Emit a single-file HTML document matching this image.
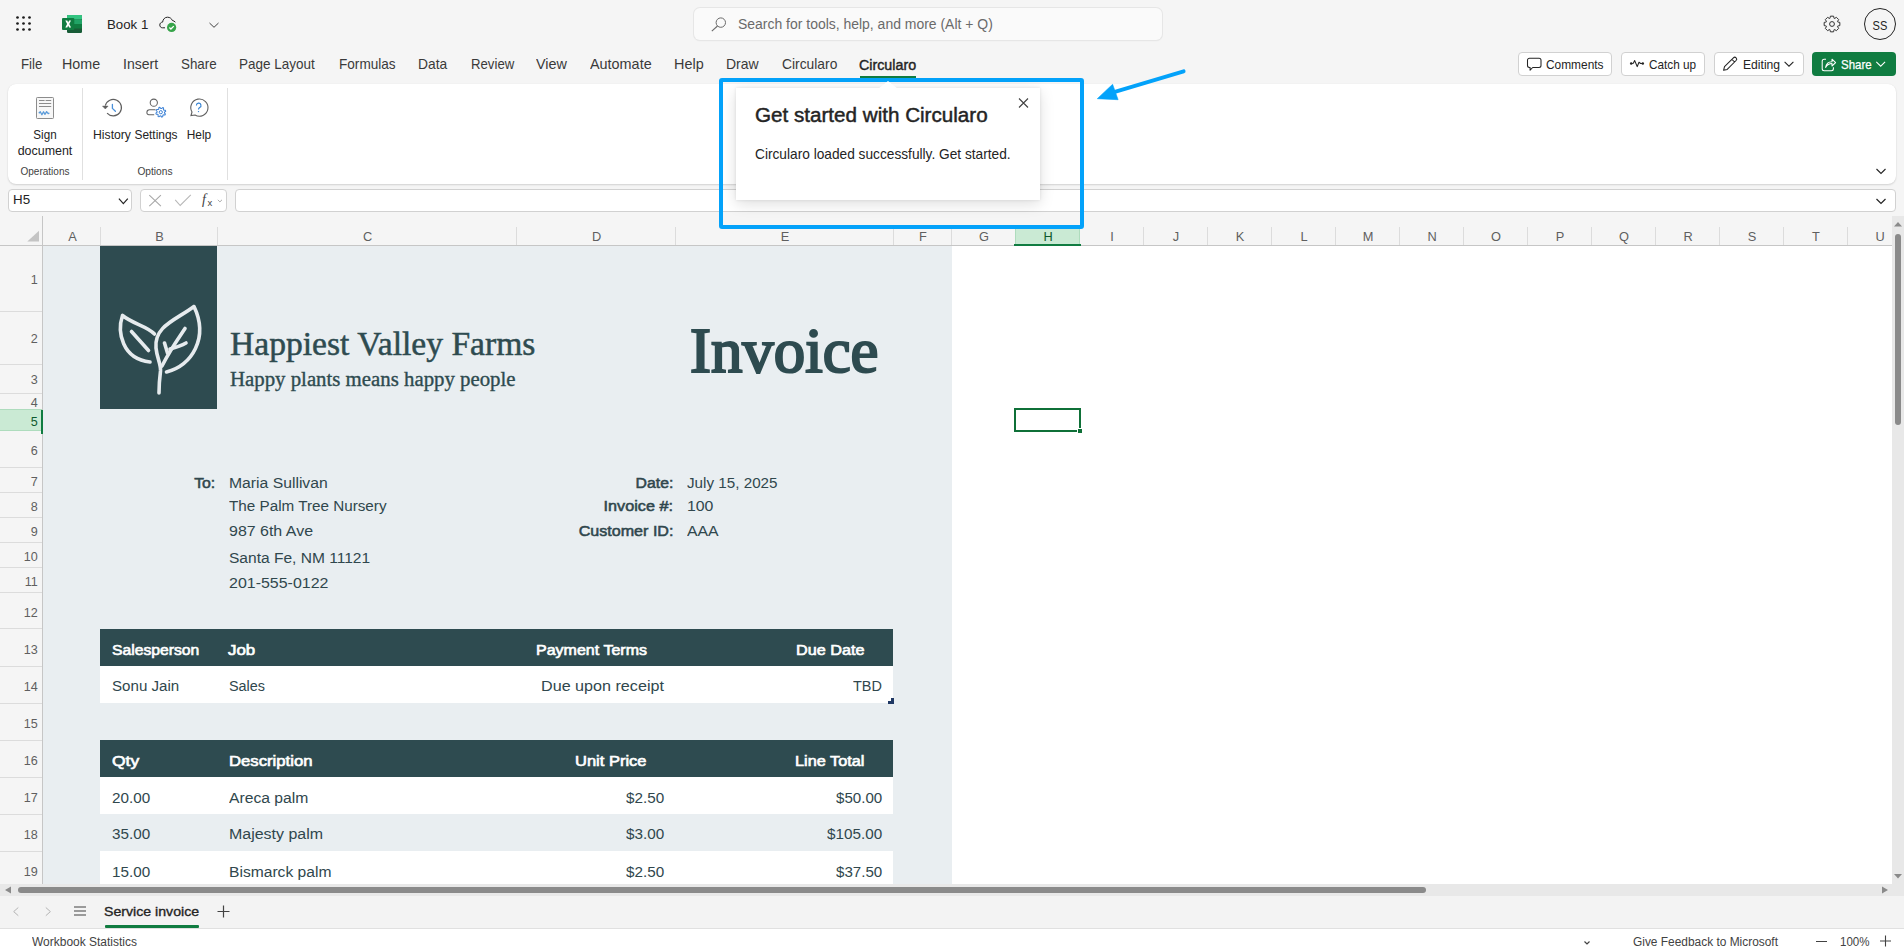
<!DOCTYPE html>
<html><head><meta charset="utf-8"><title>Excel</title>
<style>
html,body{margin:0;padding:0;}
body{width:1904px;height:951px;position:relative;overflow:hidden;background:#f5f5f5;font-family:"Liberation Sans",sans-serif;}
.t{position:absolute;white-space:nowrap;}
.r{position:absolute;display:block;}
</style></head><body>
<svg class="r" style="left:0px;top:0px;" width="40" height="40" viewBox="0 0 40 40"><circle cx="17.5" cy="17.5" r="1.35" fill="#1b1b1b"/><circle cx="17.5" cy="23.5" r="1.35" fill="#1b1b1b"/><circle cx="17.5" cy="29.5" r="1.35" fill="#1b1b1b"/><circle cx="23.5" cy="17.5" r="1.35" fill="#1b1b1b"/><circle cx="23.5" cy="23.5" r="1.35" fill="#1b1b1b"/><circle cx="23.5" cy="29.5" r="1.35" fill="#1b1b1b"/><circle cx="29.5" cy="17.5" r="1.35" fill="#1b1b1b"/><circle cx="29.5" cy="23.5" r="1.35" fill="#1b1b1b"/><circle cx="29.5" cy="29.5" r="1.35" fill="#1b1b1b"/></svg>
<svg class="r" style="left:60px;top:13px;" width="24" height="22" viewBox="0 0 24 22">
<rect x="7" y="2" width="15" height="18" rx="1.2" fill="#185c37"/>
<rect x="7" y="2" width="15" height="4.5" rx="1" fill="#33c481"/>
<rect x="7" y="6.5" width="15" height="4.5" fill="#21a366"/>
<rect x="7" y="11" width="15" height="4.5" fill="#107c41"/>
<rect x="2" y="5" width="12.3" height="12" rx="1" fill="#107c41"/>
<path d="M5.3 7.6 L7.3 7.6 L8.2 9.6 L9.1 7.6 L11 7.6 L9.3 11 L11.1 14.4 L9.1 14.4 L8.2 12.4 L7.3 14.4 L5.3 14.4 L7.1 11 Z" fill="#fff"/>
</svg>
<div class="t" id="t0" style="top:17.63px;font-size:13.2px;line-height:13.2px;color:#242424;font-weight:400;font-family:'Liberation Sans', sans-serif;left:107.372px;transform-origin:0 0;transform:scaleX(1.0047);">Book 1</div>
<svg class="r" style="left:156px;top:12px;" width="26" height="22" viewBox="0 0 26 22">
<path d="M9 15.8 H6.5 C4.5 15.8 3.8 14.2 3.8 13 C3.8 11.3 5 10.2 6.6 10.1 C6.9 7.3 8.8 5.2 11.5 5.2 C13.9 5.2 15.7 6.7 16.4 8.5 C17.4 8.7 18.5 9.2 19.4 10.2" fill="none" stroke="#242424" stroke-width="1"/>
<circle cx="15.6" cy="15.4" r="4.6" fill="#37a44a"/>
<path d="M13.4 15.6 L14.9 17 L17.8 14.1" fill="none" stroke="#fff" stroke-width="1.3"/>
</svg>
<svg class="r" style="left:205px;top:18px;" width="18" height="12" viewBox="0 0 18 12"><path d="M4.5 5 L9 9.3 L13.5 5" fill="none" stroke="#424242" stroke-width="1"/></svg>
<div class="r" style="left:694px;top:8px;width:468px;height:32px;background:#fafafa;border-radius:6px;box-shadow:0 0 0 1px #e6e6e6, 0 1px 2px rgba(0,0,0,0.06);"></div>
<svg class="r" style="left:708px;top:14px;" width="22" height="20" viewBox="0 0 22 20"><circle cx="12.8" cy="8.6" r="4.7" fill="none" stroke="#6a6a6a" stroke-width="1"/><path d="M9.5 12 L3.8 17.2" stroke="#6a6a6a" stroke-width="1.1"/></svg>
<div class="t" id="t1" style="top:17.92px;font-size:13.8px;line-height:13.8px;color:#6a6a6a;font-weight:400;font-family:'Liberation Sans', sans-serif;left:737.7479999999999px;transform-origin:0 0;transform:scaleX(1.0114);">Search for tools, help, and more (Alt + Q)</div>
<svg class="r" style="left:1820px;top:12px;" width="24" height="24" viewBox="0 0 24 24"><path d="M19.84 10.41 L19.84 13.59 L17.62 14.11 L17.47 14.48 L18.67 16.42 L16.42 18.67 L14.48 17.47 L14.11 17.62 L13.59 19.84 L10.41 19.84 L9.89 17.62 L9.52 17.47 L7.58 18.67 L5.33 16.42 L6.53 14.48 L6.38 14.11 L4.16 13.59 L4.16 10.41 L6.38 9.89 L6.53 9.52 L5.33 7.58 L7.58 5.33 L9.52 6.53 L9.89 6.38 L10.41 4.16 L13.59 4.16 L14.11 6.38 L14.48 6.53 L16.42 5.33 L18.67 7.58 L17.47 9.52 L17.62 9.89 Z" fill="none" stroke="#303030" stroke-width="1" stroke-linejoin="round"/><circle cx="12" cy="12" r="2.4" fill="none" stroke="#303030" stroke-width="1"/></svg>
<div class="r" style="left:1864px;top:8px;width:30px;height:30px;background:transparent;border:1px solid #242424;border-radius:50%;"></div>
<div class="t" id="t2" style="top:20.19px;font-size:12.3px;line-height:12.3px;color:#242424;font-weight:400;font-family:'Liberation Sans', sans-serif;left:1579.9px;width:600px;text-align:center;transform-origin:50% 0;transform:scaleX(0.9011);">SS</div>
<div class="t" id="t3" style="top:57.40px;font-size:14.3px;line-height:14.3px;color:#3a3a3a;font-weight:400;font-family:'Liberation Sans', sans-serif;left:20.828px;transform-origin:0 0;transform:scaleX(0.9261);">File</div>
<div class="t" id="t4" style="top:57.40px;font-size:14.3px;line-height:14.3px;color:#3a3a3a;font-weight:400;font-family:'Liberation Sans', sans-serif;left:62.428px;transform-origin:0 0;transform:scaleX(1.0001);">Home</div>
<div class="t" id="t5" style="top:57.40px;font-size:14.3px;line-height:14.3px;color:#3a3a3a;font-weight:400;font-family:'Liberation Sans', sans-serif;left:123.428px;transform-origin:0 0;transform:scaleX(0.9826);">Insert</div>
<div class="t" id="t6" style="top:57.40px;font-size:14.3px;line-height:14.3px;color:#3a3a3a;font-weight:400;font-family:'Liberation Sans', sans-serif;left:180.928px;transform-origin:0 0;transform:scaleX(0.9342);">Share</div>
<div class="t" id="t7" style="top:57.40px;font-size:14.3px;line-height:14.3px;color:#3a3a3a;font-weight:400;font-family:'Liberation Sans', sans-serif;left:239.428px;transform-origin:0 0;transform:scaleX(0.9433);">Page Layout</div>
<div class="t" id="t8" style="top:57.40px;font-size:14.3px;line-height:14.3px;color:#3a3a3a;font-weight:400;font-family:'Liberation Sans', sans-serif;left:338.928px;transform-origin:0 0;transform:scaleX(0.9505);">Formulas</div>
<div class="t" id="t9" style="top:57.40px;font-size:14.3px;line-height:14.3px;color:#3a3a3a;font-weight:400;font-family:'Liberation Sans', sans-serif;left:418.428px;transform-origin:0 0;transform:scaleX(0.9649);">Data</div>
<div class="t" id="t10" style="top:57.40px;font-size:14.3px;line-height:14.3px;color:#3a3a3a;font-weight:400;font-family:'Liberation Sans', sans-serif;left:470.828px;transform-origin:0 0;transform:scaleX(0.9222);">Review</div>
<div class="t" id="t11" style="top:57.40px;font-size:14.3px;line-height:14.3px;color:#3a3a3a;font-weight:400;font-family:'Liberation Sans', sans-serif;left:536.428px;transform-origin:0 0;transform:scaleX(1.0068);">View</div>
<div class="t" id="t12" style="top:57.40px;font-size:14.3px;line-height:14.3px;color:#3a3a3a;font-weight:400;font-family:'Liberation Sans', sans-serif;left:589.928px;transform-origin:0 0;transform:scaleX(1.0072);">Automate</div>
<div class="t" id="t13" style="top:57.40px;font-size:14.3px;line-height:14.3px;color:#3a3a3a;font-weight:400;font-family:'Liberation Sans', sans-serif;left:673.928px;transform-origin:0 0;transform:scaleX(1.0081);">Help</div>
<div class="t" id="t14" style="top:57.40px;font-size:14.3px;line-height:14.3px;color:#3a3a3a;font-weight:400;font-family:'Liberation Sans', sans-serif;left:726.428px;transform-origin:0 0;transform:scaleX(0.9781);">Draw</div>
<div class="t" id="t15" style="top:57.40px;font-size:14.3px;line-height:14.3px;color:#3a3a3a;font-weight:400;font-family:'Liberation Sans', sans-serif;left:781.728px;transform-origin:0 0;transform:scaleX(0.9675);">Circularo</div>
<div class="t" id="t16" style="top:57.65px;font-size:14px;line-height:14px;color:#242424;font-weight:400;font-family:'Liberation Sans', sans-serif;left:859.44px;transform-origin:0 0;transform:scaleX(1.0197);-webkit-text-stroke:0.4px currentColor;">Circularo</div>
<div class="r" style="left:860px;top:75.6px;width:56px;height:2.6px;background:#107c41;"></div>
<div class="r" style="left:1517.5px;top:52px;width:94px;height:24px;background:#ffffff;box-sizing:border-box;border:1px solid #d1d1d1;border-radius:4px;"></div>
<div class="t" id="t17" style="top:59.00px;font-size:12.4px;line-height:12.4px;color:#242424;font-weight:400;font-family:'Liberation Sans', sans-serif;left:1546.004px;transform-origin:0 0;transform:scaleX(0.9597);">Comments</div>
<svg class="r" style="left:1524px;top:54px;" width="20" height="20" viewBox="0 0 20 20"><path d="M5.5 4.3 h9.5 a2 2 0 0 1 2 2 v5.2 a2 2 0 0 1 -2 2 h-6.3 l-2.6 2.7 v-2.7 h-0.6 a2 2 0 0 1 -2 -2 v-5.2 a2 2 0 0 1 2 -2 Z" fill="none" stroke="#242424" stroke-width="1.05" stroke-linejoin="round"/></svg>
<div class="r" style="left:1620.5px;top:52px;width:84px;height:24px;background:#ffffff;box-sizing:border-box;border:1px solid #d1d1d1;border-radius:4px;"></div>
<div class="t" id="t18" style="top:59.00px;font-size:12.4px;line-height:12.4px;color:#242424;font-weight:400;font-family:'Liberation Sans', sans-serif;left:1649.3039999999999px;transform-origin:0 0;transform:scaleX(0.9496);">Catch up</div>
<svg class="r" style="left:1626px;top:54px;" width="22" height="20" viewBox="0 0 22 20"><path d="M5 9.5 L7.3 9.2 L8.7 6.6 L11.2 12.6 L13 8.3 L14.6 9.5 L17 9.5" fill="none" stroke="#242424" stroke-width="1.1" stroke-linejoin="round"/><circle cx="5.2" cy="9.5" r="1.25" fill="#242424"/><circle cx="16.8" cy="9.5" r="1.25" fill="#242424"/></svg>
<div class="r" style="left:1713.5px;top:52px;width:90px;height:24px;background:#ffffff;box-sizing:border-box;border:1px solid #d1d1d1;border-radius:4px;"></div>
<div class="t" id="t19" style="top:59.00px;font-size:12.4px;line-height:12.4px;color:#242424;font-weight:400;font-family:'Liberation Sans', sans-serif;left:1742.6039999999998px;transform-origin:0 0;transform:scaleX(0.9789);">Editing</div>
<svg class="r" style="left:1718px;top:52px;" width="80" height="24" viewBox="0 0 80 24"><path d="M5.6 18.3 l0.9 -3.6 l8.9 -8.9 a1.9 1.9 0 0 1 2.7 2.7 l-8.9 8.9 Z M13.9 7.3 l2.7 2.7" fill="none" stroke="#242424" stroke-width="1.05" stroke-linejoin="round"/><path d="M66.6 9.8 l4.4 4.4 l4.4 -4.4" fill="none" stroke="#242424" stroke-width="1.05"/></svg>
<div class="r" style="left:1812px;top:52px;width:84px;height:24px;background:#107c41;border-radius:4px;"></div>
<div class="t" id="t20" style="top:59.00px;font-size:12.4px;line-height:12.4px;color:#ffffff;font-weight:400;font-family:'Liberation Sans', sans-serif;left:1840.904px;transform-origin:0 0;transform:scaleX(0.9248);-webkit-text-stroke:0.25px #fff;">Share</div>
<svg class="r" style="left:1812px;top:52px;" width="84" height="24" viewBox="0 0 84 24"><path d="M14 7.2 h-1.8 a2 2 0 0 0 -2 2 v7.6 a2 2 0 0 0 2 2 h7.2 a2 2 0 0 0 2 -2 v-1.6" fill="none" stroke="#fff" stroke-width="1.05"/><path d="M13.6 15.4 c0.6 -3.6 2.9 -5.6 6.4 -5.6 v-2.6 l3.6 3.4 l-3.6 3.4 v-2.5 c-2.6 0 -4.8 1.1 -6.4 3.9 Z" fill="none" stroke="#fff" stroke-width="1.05" stroke-linejoin="round"/><path d="M64.3 9.8 l4.4 4.4 l4.4 -4.4" fill="none" stroke="#fff" stroke-width="1.05"/></svg>
<div class="r" style="left:8px;top:84px;width:1888px;height:100px;background:#ffffff;border-radius:8px;box-shadow:0 1px 2px rgba(0,0,0,0.14), 0 0 1px rgba(0,0,0,0.08);"></div>
<div class="r" style="left:82px;top:88px;width:1px;height:92px;background:#e0e0e0;"></div>
<div class="r" style="left:227px;top:88px;width:1px;height:92px;background:#e0e0e0;"></div>
<svg class="r" style="left:32px;top:94px;" width="26" height="28" viewBox="0 0 26 28"><rect x="4.5" y="3.5" width="17" height="21" rx="0.8" fill="#f7f7f7" stroke="#8c8c8c" stroke-width="1"/>
<path d="M7 6.5 h5.6 M13.6 6.5 h5.6 M7 9.5 h12.2 M7 12.5 h12.2" stroke="#8c8c8c" stroke-width="1"/>
<path d="M6.8 19.3 l1.5 -1.6 l1.6 3 l1.6 -2.9 l1.5 2.5 l1.6 -2.7 l1.6 2 l1.2 -0.6" fill="none" stroke="#5b9bd9" stroke-width="1.3" stroke-linejoin="round"/></svg>
<div class="t" id="t21" style="top:128.79px;font-size:12.3px;line-height:12.3px;color:#242424;font-weight:400;font-family:'Liberation Sans', sans-serif;left:-255.15px;width:600px;text-align:center;transform-origin:50% 0;transform:scaleX(0.9455);">Sign</div>
<div class="t" id="t22" style="top:144.79px;font-size:12.3px;line-height:12.3px;color:#242424;font-weight:400;font-family:'Liberation Sans', sans-serif;left:-254.9px;width:600px;text-align:center;transform-origin:50% 0;transform:scaleX(1.0105);">document</div>
<div class="t" id="t23" style="top:167.17px;font-size:10.2px;line-height:10.2px;color:#424242;font-weight:400;font-family:'Liberation Sans', sans-serif;left:-255.1px;width:600px;text-align:center;transform-origin:50% 0;transform:scaleX(0.9834);">Operations</div>
<svg class="r" style="left:100px;top:95px;" width="26" height="24" viewBox="0 0 26 24"><path d="M5.3 10.6 A8.2 8.2 0 1 1 7.1 18.1" fill="none" stroke="#5f5f5f" stroke-width="1.2"/>
<path d="M2.5 11.1 L8.1 11.1 L5.3 14 Z" fill="#5f5f5f" stroke="#5f5f5f" stroke-width="0.5" stroke-linejoin="round"/>
<path d="M12.4 9.4 V13.4 L15.4 16.3" fill="none" stroke="#4a90d9" stroke-width="1.3" stroke-linecap="round" stroke-linejoin="round"/></svg>
<div class="t" id="t24" style="top:128.79px;font-size:12.3px;line-height:12.3px;color:#242424;font-weight:400;font-family:'Liberation Sans', sans-serif;left:-188.0px;width:600px;text-align:center;transform-origin:50% 0;transform:scaleX(0.9926);">History</div>
<svg class="r" style="left:143px;top:94px;" width="28" height="28" viewBox="0 0 28 28"><circle cx="10.8" cy="8.7" r="3.6" fill="none" stroke="#616161" stroke-width="1.05"/>
<path d="M12.5 15.8 h-6 a2.6 2.6 0 0 0 -2.6 2.6 v0.4 a1.9 1.9 0 0 0 1.9 1.9 h5.4" fill="none" stroke="#616161" stroke-width="1.05"/>
<path d="M21.43 18.92 L22.42 20.11 L21.96 20.98 L20.42 20.82 L19.86 21.28 L19.71 22.82 L18.78 23.10 L17.80 21.90 L17.08 21.83 L15.89 22.82 L15.02 22.36 L15.18 20.82 L14.72 20.26 L13.18 20.11 L12.90 19.18 L14.10 18.20 L14.17 17.48 L13.18 16.29 L13.64 15.42 L15.18 15.58 L15.74 15.12 L15.89 13.58 L16.82 13.30 L17.80 14.50 L18.52 14.57 L19.71 13.58 L20.58 14.04 L20.42 15.58 L20.88 16.14 L22.42 16.29 L22.70 17.22 L21.50 18.20 Z" fill="#ffffff" stroke="#3f83d6" stroke-width="1.05" stroke-linejoin="round"/>
<circle cx="17.8" cy="18.2" r="1.6" fill="none" stroke="#3f83d6" stroke-width="1"/></svg>
<div class="t" id="t25" style="top:128.79px;font-size:12.3px;line-height:12.3px;color:#242424;font-weight:400;font-family:'Liberation Sans', sans-serif;left:-144.0px;width:600px;text-align:center;transform-origin:50% 0;transform:scaleX(0.9673);">Settings</div>
<svg class="r" style="left:184.5px;top:95px;" width="26" height="26" viewBox="0 0 26 26"><path d="M6 20.5 l1-3.5 A8.6 8.6 0 1 1 10 20 Z" fill="none" stroke="#616161" stroke-width="1.1"/>
<path d="M11.4 10.5 a2.3 2.3 0 1 1 3.3 2 c-0.8 0.5 -1.2 1 -1.2 1.9" fill="none" stroke="#2f7fd1" stroke-width="1.1"/>
<circle cx="13.5" cy="16.6" r="0.7" fill="#2f7fd1"/></svg>
<div class="t" id="t26" style="top:128.79px;font-size:12.3px;line-height:12.3px;color:#242424;font-weight:400;font-family:'Liberation Sans', sans-serif;left:-100.75px;width:600px;text-align:center;transform-origin:50% 0;transform:scaleX(0.9679);">Help</div>
<div class="t" id="t27" style="top:167.17px;font-size:10.2px;line-height:10.2px;color:#424242;font-weight:400;font-family:'Liberation Sans', sans-serif;left:-145.15px;width:600px;text-align:center;transform-origin:50% 0;transform:scaleX(1.0002);">Options</div>
<svg class="r" style="left:1872px;top:163.5px;" width="18" height="14" viewBox="0 0 18 14"><path d="M4.5 5 L9 9.5 L13.5 5" fill="none" stroke="#242424" stroke-width="1.1"/></svg>
<div class="r" style="left:8px;top:188.5px;width:123.5px;height:23px;background:#ffffff;box-sizing:border-box;border:1px solid #d1d1d1;border-radius:4px;"></div>
<div class="t" id="t28" style="top:193.49px;font-size:13.6px;line-height:13.6px;color:#242424;font-weight:400;font-family:'Liberation Sans', sans-serif;left:12.856px;transform-origin:0 0;transform:scaleX(0.9826);">H5</div>
<svg class="r" style="left:112px;top:190px;" width="18" height="18" viewBox="0 0 18 18"><path d="M6.9 8.6 L11.35 13.6 L15.8 8.6" fill="none" stroke="#242424" stroke-width="1.2"/></svg>
<div class="r" style="left:140px;top:188.5px;width:87px;height:23px;background:#ffffff;box-sizing:border-box;border:1px solid #d1d1d1;border-radius:4px;"></div>
<svg class="r" style="left:140px;top:188.5px;" width="87" height="23" viewBox="0 0 87 23"><path d="M9.3 6.2 l11.6 11 M20.9 6.2 l-11.6 11" stroke="#a8a8a8" stroke-width="1.1" fill="none"/>
<path d="M35.2 10.8 l5 5.7 l10.6 -10.6" stroke="#b8b8b8" stroke-width="1.1" fill="none"/>
<text x="62" y="15" font-family="Liberation Serif" font-style="italic" font-size="14" fill="#424242">f</text>
<text x="67.5" y="17.2" font-family="Liberation Sans" font-size="9.5" fill="#424242">x</text>
<path d="M77.8 10.8 l2.1 2.1 l2.1 -2.1" stroke="#a0a0a0" stroke-width="0.9" fill="none"/></svg>
<div class="r" style="left:235px;top:188.5px;width:1661px;height:23px;background:#ffffff;box-sizing:border-box;border:1px solid #d1d1d1;border-radius:4px;"></div>
<svg class="r" style="left:1872px;top:193.5px;" width="18" height="16" viewBox="0 0 18 16"><path d="M4.5 5 L9 9.5 L13.5 5" fill="none" stroke="#242424" stroke-width="1.2"/></svg>
<div class="r" style="left:43px;top:246px;width:1849px;height:638px;background:#ffffff;"></div>
<div class="r" style="left:43px;top:246px;width:909px;height:638px;background:#e9eef1;"></div>
<div class="r" style="left:0px;top:216px;width:1892px;height:30px;background:#f5f5f5;"></div>
<div class="r" style="left:1015px;top:228px;width:64px;height:17px;background:#caead4;"></div>
<div class="r" style="left:100px;top:227px;width:1px;height:18px;background:#dcdcdc;"></div>
<div class="t" id="t29" style="top:230.76px;font-size:12.8px;line-height:12.8px;color:#5f5f5f;font-weight:400;font-family:'Liberation Sans', sans-serif;left:-227.5px;width:600px;text-align:center;transform-origin:50% 0;">A</div>
<div class="r" style="left:217px;top:227px;width:1px;height:18px;background:#dcdcdc;"></div>
<div class="t" id="t30" style="top:230.76px;font-size:12.8px;line-height:12.8px;color:#5f5f5f;font-weight:400;font-family:'Liberation Sans', sans-serif;left:-140.5px;width:600px;text-align:center;transform-origin:50% 0;">B</div>
<div class="r" style="left:516px;top:227px;width:1px;height:18px;background:#dcdcdc;"></div>
<div class="t" id="t31" style="top:230.76px;font-size:12.8px;line-height:12.8px;color:#5f5f5f;font-weight:400;font-family:'Liberation Sans', sans-serif;left:67.5px;width:600px;text-align:center;transform-origin:50% 0;">C</div>
<div class="r" style="left:675px;top:227px;width:1px;height:18px;background:#dcdcdc;"></div>
<div class="t" id="t32" style="top:230.76px;font-size:12.8px;line-height:12.8px;color:#5f5f5f;font-weight:400;font-family:'Liberation Sans', sans-serif;left:296.5px;width:600px;text-align:center;transform-origin:50% 0;">D</div>
<div class="r" style="left:893px;top:227px;width:1px;height:18px;background:#dcdcdc;"></div>
<div class="t" id="t33" style="top:230.76px;font-size:12.8px;line-height:12.8px;color:#5f5f5f;font-weight:400;font-family:'Liberation Sans', sans-serif;left:485.0px;width:600px;text-align:center;transform-origin:50% 0;">E</div>
<div class="r" style="left:951px;top:227px;width:1px;height:18px;background:#dcdcdc;"></div>
<div class="t" id="t34" style="top:230.76px;font-size:12.8px;line-height:12.8px;color:#5f5f5f;font-weight:400;font-family:'Liberation Sans', sans-serif;left:623.0px;width:600px;text-align:center;transform-origin:50% 0;">F</div>
<div class="r" style="left:1015px;top:227px;width:1px;height:18px;background:#dcdcdc;"></div>
<div class="t" id="t35" style="top:230.76px;font-size:12.8px;line-height:12.8px;color:#5f5f5f;font-weight:400;font-family:'Liberation Sans', sans-serif;left:684.0px;width:600px;text-align:center;transform-origin:50% 0;">G</div>
<div class="r" style="left:1079px;top:227px;width:1px;height:18px;background:#dcdcdc;"></div>
<div class="t" id="t36" style="top:230.76px;font-size:12.8px;line-height:12.8px;color:#0e5a2e;font-weight:400;font-family:'Liberation Sans', sans-serif;left:748.0px;width:600px;text-align:center;transform-origin:50% 0;">H</div>
<div class="r" style="left:1143px;top:227px;width:1px;height:18px;background:#dcdcdc;"></div>
<div class="t" id="t37" style="top:230.76px;font-size:12.8px;line-height:12.8px;color:#5f5f5f;font-weight:400;font-family:'Liberation Sans', sans-serif;left:812.0px;width:600px;text-align:center;transform-origin:50% 0;">I</div>
<div class="r" style="left:1207px;top:227px;width:1px;height:18px;background:#dcdcdc;"></div>
<div class="t" id="t38" style="top:230.76px;font-size:12.8px;line-height:12.8px;color:#5f5f5f;font-weight:400;font-family:'Liberation Sans', sans-serif;left:876.0px;width:600px;text-align:center;transform-origin:50% 0;">J</div>
<div class="r" style="left:1271px;top:227px;width:1px;height:18px;background:#dcdcdc;"></div>
<div class="t" id="t39" style="top:230.76px;font-size:12.8px;line-height:12.8px;color:#5f5f5f;font-weight:400;font-family:'Liberation Sans', sans-serif;left:940.0px;width:600px;text-align:center;transform-origin:50% 0;">K</div>
<div class="r" style="left:1335px;top:227px;width:1px;height:18px;background:#dcdcdc;"></div>
<div class="t" id="t40" style="top:230.76px;font-size:12.8px;line-height:12.8px;color:#5f5f5f;font-weight:400;font-family:'Liberation Sans', sans-serif;left:1004.0px;width:600px;text-align:center;transform-origin:50% 0;">L</div>
<div class="r" style="left:1399px;top:227px;width:1px;height:18px;background:#dcdcdc;"></div>
<div class="t" id="t41" style="top:230.76px;font-size:12.8px;line-height:12.8px;color:#5f5f5f;font-weight:400;font-family:'Liberation Sans', sans-serif;left:1068.0px;width:600px;text-align:center;transform-origin:50% 0;">M</div>
<div class="r" style="left:1463px;top:227px;width:1px;height:18px;background:#dcdcdc;"></div>
<div class="t" id="t42" style="top:230.76px;font-size:12.8px;line-height:12.8px;color:#5f5f5f;font-weight:400;font-family:'Liberation Sans', sans-serif;left:1132.0px;width:600px;text-align:center;transform-origin:50% 0;">N</div>
<div class="r" style="left:1527px;top:227px;width:1px;height:18px;background:#dcdcdc;"></div>
<div class="t" id="t43" style="top:230.76px;font-size:12.8px;line-height:12.8px;color:#5f5f5f;font-weight:400;font-family:'Liberation Sans', sans-serif;left:1196.0px;width:600px;text-align:center;transform-origin:50% 0;">O</div>
<div class="r" style="left:1591px;top:227px;width:1px;height:18px;background:#dcdcdc;"></div>
<div class="t" id="t44" style="top:230.76px;font-size:12.8px;line-height:12.8px;color:#5f5f5f;font-weight:400;font-family:'Liberation Sans', sans-serif;left:1260.0px;width:600px;text-align:center;transform-origin:50% 0;">P</div>
<div class="r" style="left:1655px;top:227px;width:1px;height:18px;background:#dcdcdc;"></div>
<div class="t" id="t45" style="top:230.76px;font-size:12.8px;line-height:12.8px;color:#5f5f5f;font-weight:400;font-family:'Liberation Sans', sans-serif;left:1324.0px;width:600px;text-align:center;transform-origin:50% 0;">Q</div>
<div class="r" style="left:1719px;top:227px;width:1px;height:18px;background:#dcdcdc;"></div>
<div class="t" id="t46" style="top:230.76px;font-size:12.8px;line-height:12.8px;color:#5f5f5f;font-weight:400;font-family:'Liberation Sans', sans-serif;left:1388.0px;width:600px;text-align:center;transform-origin:50% 0;">R</div>
<div class="r" style="left:1783px;top:227px;width:1px;height:18px;background:#dcdcdc;"></div>
<div class="t" id="t47" style="top:230.76px;font-size:12.8px;line-height:12.8px;color:#5f5f5f;font-weight:400;font-family:'Liberation Sans', sans-serif;left:1452.0px;width:600px;text-align:center;transform-origin:50% 0;">S</div>
<div class="r" style="left:1847px;top:227px;width:1px;height:18px;background:#dcdcdc;"></div>
<div class="t" id="t48" style="top:230.76px;font-size:12.8px;line-height:12.8px;color:#5f5f5f;font-weight:400;font-family:'Liberation Sans', sans-serif;left:1516.0px;width:600px;text-align:center;transform-origin:50% 0;">T</div>
<div class="t" id="t49" style="top:230.76px;font-size:12.8px;line-height:12.8px;color:#5f5f5f;font-weight:400;font-family:'Liberation Sans', sans-serif;left:1580.0px;width:600px;text-align:center;transform-origin:50% 0;">U</div>
<div class="r" style="left:0px;top:245px;width:1892px;height:1px;background:#c6c6c6;"></div>
<div class="r" style="left:1015px;top:228px;width:1px;height:17px;background:#aedcbd;"></div>
<div class="r" style="left:1079px;top:228px;width:1px;height:17px;background:#aedcbd;"></div>
<div class="r" style="left:1014px;top:244px;width:67px;height:2px;background:#107c41;"></div>
<svg class="r" style="left:22px;top:226px;" width="20" height="20" viewBox="0 0 20 20"><path d="M17 4.7 L17 15.6 L5.3 15.6 Z" fill="#c4c4c4"/></svg>
<div class="r" style="left:0px;top:246px;width:42px;height:638px;background:#f5f5f5;"></div>
<div class="r" style="left:0px;top:409px;width:42px;height:22px;background:#caead4;"></div>
<div class="r" style="left:0px;top:311px;width:42px;height:1px;background:#dcdcdc;"></div>
<div class="t" id="t50" style="top:274.43px;font-size:12.6px;line-height:12.6px;color:#5f5f5f;font-weight:400;font-family:'Liberation Sans', sans-serif;right:1866.2px;text-align:right;transform-origin:100% 0;">1</div>
<div class="r" style="left:0px;top:364px;width:42px;height:1px;background:#dcdcdc;"></div>
<div class="t" id="t51" style="top:333.43px;font-size:12.6px;line-height:12.6px;color:#5f5f5f;font-weight:400;font-family:'Liberation Sans', sans-serif;right:1866.2px;text-align:right;transform-origin:100% 0;">2</div>
<div class="r" style="left:0px;top:393px;width:42px;height:1px;background:#dcdcdc;"></div>
<div class="t" id="t52" style="top:374.43px;font-size:12.6px;line-height:12.6px;color:#5f5f5f;font-weight:400;font-family:'Liberation Sans', sans-serif;right:1866.2px;text-align:right;transform-origin:100% 0;">3</div>
<div class="r" style="left:0px;top:409px;width:42px;height:1px;background:#dcdcdc;"></div>
<div class="t" id="t53" style="top:397.43px;font-size:12.6px;line-height:12.6px;color:#5f5f5f;font-weight:400;font-family:'Liberation Sans', sans-serif;right:1866.2px;text-align:right;transform-origin:100% 0;">4</div>
<div class="r" style="left:0px;top:430px;width:42px;height:1px;background:#dcdcdc;"></div>
<div class="t" id="t54" style="top:416.43px;font-size:12.6px;line-height:12.6px;color:#0e5a2e;font-weight:400;font-family:'Liberation Sans', sans-serif;right:1866.2px;text-align:right;transform-origin:100% 0;">5</div>
<div class="r" style="left:0px;top:467px;width:42px;height:1px;background:#dcdcdc;"></div>
<div class="t" id="t55" style="top:445.43px;font-size:12.6px;line-height:12.6px;color:#5f5f5f;font-weight:400;font-family:'Liberation Sans', sans-serif;right:1866.2px;text-align:right;transform-origin:100% 0;">6</div>
<div class="r" style="left:0px;top:492px;width:42px;height:1px;background:#dcdcdc;"></div>
<div class="t" id="t56" style="top:476.43px;font-size:12.6px;line-height:12.6px;color:#5f5f5f;font-weight:400;font-family:'Liberation Sans', sans-serif;right:1866.2px;text-align:right;transform-origin:100% 0;">7</div>
<div class="r" style="left:0px;top:517px;width:42px;height:1px;background:#dcdcdc;"></div>
<div class="t" id="t57" style="top:501.43px;font-size:12.6px;line-height:12.6px;color:#5f5f5f;font-weight:400;font-family:'Liberation Sans', sans-serif;right:1866.2px;text-align:right;transform-origin:100% 0;">8</div>
<div class="r" style="left:0px;top:542px;width:42px;height:1px;background:#dcdcdc;"></div>
<div class="t" id="t58" style="top:526.43px;font-size:12.6px;line-height:12.6px;color:#5f5f5f;font-weight:400;font-family:'Liberation Sans', sans-serif;right:1866.2px;text-align:right;transform-origin:100% 0;">9</div>
<div class="r" style="left:0px;top:567px;width:42px;height:1px;background:#dcdcdc;"></div>
<div class="t" id="t59" style="top:551.43px;font-size:12.6px;line-height:12.6px;color:#5f5f5f;font-weight:400;font-family:'Liberation Sans', sans-serif;right:1866.2px;text-align:right;transform-origin:100% 0;">10</div>
<div class="r" style="left:0px;top:592px;width:42px;height:1px;background:#dcdcdc;"></div>
<div class="t" id="t60" style="top:576.43px;font-size:12.6px;line-height:12.6px;color:#5f5f5f;font-weight:400;font-family:'Liberation Sans', sans-serif;right:1866.2px;text-align:right;transform-origin:100% 0;">11</div>
<div class="r" style="left:0px;top:628px;width:42px;height:1px;background:#dcdcdc;"></div>
<div class="t" id="t61" style="top:606.93px;font-size:12.6px;line-height:12.6px;color:#5f5f5f;font-weight:400;font-family:'Liberation Sans', sans-serif;right:1866.2px;text-align:right;transform-origin:100% 0;">12</div>
<div class="r" style="left:0px;top:666px;width:42px;height:1px;background:#dcdcdc;"></div>
<div class="t" id="t62" style="top:644.33px;font-size:12.6px;line-height:12.6px;color:#5f5f5f;font-weight:400;font-family:'Liberation Sans', sans-serif;right:1866.2px;text-align:right;transform-origin:100% 0;">13</div>
<div class="r" style="left:0px;top:703px;width:42px;height:1px;background:#dcdcdc;"></div>
<div class="t" id="t63" style="top:681.33px;font-size:12.6px;line-height:12.6px;color:#5f5f5f;font-weight:400;font-family:'Liberation Sans', sans-serif;right:1866.2px;text-align:right;transform-origin:100% 0;">14</div>
<div class="r" style="left:0px;top:740px;width:42px;height:1px;background:#dcdcdc;"></div>
<div class="t" id="t64" style="top:718.33px;font-size:12.6px;line-height:12.6px;color:#5f5f5f;font-weight:400;font-family:'Liberation Sans', sans-serif;right:1866.2px;text-align:right;transform-origin:100% 0;">15</div>
<div class="r" style="left:0px;top:777px;width:42px;height:1px;background:#dcdcdc;"></div>
<div class="t" id="t65" style="top:755.33px;font-size:12.6px;line-height:12.6px;color:#5f5f5f;font-weight:400;font-family:'Liberation Sans', sans-serif;right:1866.2px;text-align:right;transform-origin:100% 0;">16</div>
<div class="r" style="left:0px;top:814px;width:42px;height:1px;background:#dcdcdc;"></div>
<div class="t" id="t66" style="top:792.33px;font-size:12.6px;line-height:12.6px;color:#5f5f5f;font-weight:400;font-family:'Liberation Sans', sans-serif;right:1866.2px;text-align:right;transform-origin:100% 0;">17</div>
<div class="r" style="left:0px;top:851px;width:42px;height:1px;background:#dcdcdc;"></div>
<div class="t" id="t67" style="top:829.33px;font-size:12.6px;line-height:12.6px;color:#5f5f5f;font-weight:400;font-family:'Liberation Sans', sans-serif;right:1866.2px;text-align:right;transform-origin:100% 0;">18</div>
<div class="t" id="t68" style="top:866.33px;font-size:12.6px;line-height:12.6px;color:#5f5f5f;font-weight:400;font-family:'Liberation Sans', sans-serif;right:1866.2px;text-align:right;transform-origin:100% 0;">19</div>
<div class="r" style="left:0px;top:409px;width:42px;height:1px;background:#aedcbd;"></div>
<div class="r" style="left:0px;top:430px;width:42px;height:1px;background:#aedcbd;"></div>
<div class="r" style="left:42px;top:216px;width:1px;height:668px;background:#c6c6c6;"></div>
<div class="r" style="left:41px;top:410px;width:2px;height:24px;background:#107c41;"></div>
<div class="r" style="left:100px;top:246px;width:117px;height:163px;background:#2e4b50;"></div>
<svg class="r" style="left:100px;top:246px;" width="117" height="163" viewBox="0 0 117 163"><g fill="none" stroke="#e6ebee" stroke-width="3.6" stroke-linecap="round" stroke-linejoin="round">
<path d="M54.5 88 C47 80 33 78 22.5 69.5 C17 86 22 113 50 116"/>
<path d="M31.5 85.5 L48.5 104.5"/>
<path d="M66.5 126 C92 119 109 92 94 60.5 C76 74 54 80 56 102 C57 112 61 118 60.5 125 C59.5 133 59 140 59 147"/>
<path d="M85 82.5 C78 93 70 104 62 120"/>
<path d="M64.5 97 L67.5 107"/>
<path d="M86 97 C81 100 76 101.5 70 103"/>
</g></svg>
<div class="t" id="t69" style="top:327.42px;font-size:34px;line-height:34px;color:#2e4b50;font-weight:400;font-family:'Liberation Serif', serif;left:230.23999999999998px;transform-origin:0 0;transform:scaleX(0.9881);-webkit-text-stroke:0.5px currentColor;">Happiest Valley Farms</div>
<div class="t" id="t70" style="top:368.83px;font-size:20.5px;line-height:20.5px;color:#2e4b50;font-weight:400;font-family:'Liberation Serif', serif;left:229.58px;transform-origin:0 0;transform:scaleX(1.0153);-webkit-text-stroke:0.35px currentColor;">Happy plants means happy people</div>
<div class="t" id="t71" style="top:319.84px;font-size:63px;line-height:63px;color:#2e4b50;font-weight:400;font-family:'Liberation Serif', serif;left:690.38px;transform-origin:0 0;transform:scaleX(0.9980);-webkit-text-stroke:2.2px currentColor;">Invoice</div>
<div class="t" id="t72" style="top:474.93px;font-size:15.2px;line-height:15.2px;color:#30474d;font-weight:400;font-family:'Liberation Sans', sans-serif;right:1688.492px;text-align:right;transform-origin:100% 0;transform:scaleX(1.0420);-webkit-text-stroke:0.55px currentColor;">To:</div>
<div class="t" id="t73" style="top:474.76px;font-size:15.4px;line-height:15.4px;color:#30474d;font-weight:400;font-family:'Liberation Sans', sans-serif;left:228.884px;transform-origin:0 0;transform:scaleX(1.0213);">Maria Sullivan</div>
<div class="t" id="t74" style="top:497.66px;font-size:15.4px;line-height:15.4px;color:#30474d;font-weight:400;font-family:'Liberation Sans', sans-serif;left:228.884px;transform-origin:0 0;transform:scaleX(0.9902);">The Palm Tree Nursery</div>
<div class="t" id="t75" style="top:522.86px;font-size:15.4px;line-height:15.4px;color:#30474d;font-weight:400;font-family:'Liberation Sans', sans-serif;left:228.884px;transform-origin:0 0;transform:scaleX(1.0370);">987 6th Ave</div>
<div class="t" id="t76" style="top:549.66px;font-size:15.4px;line-height:15.4px;color:#30474d;font-weight:400;font-family:'Liberation Sans', sans-serif;left:228.884px;transform-origin:0 0;transform:scaleX(1.0100);">Santa Fe, NM 11121</div>
<div class="t" id="t77" style="top:574.56px;font-size:15.4px;line-height:15.4px;color:#30474d;font-weight:400;font-family:'Liberation Sans', sans-serif;left:228.884px;transform-origin:0 0;transform:scaleX(1.0373);">201-555-0122</div>
<div class="t" id="t78" style="top:474.83px;font-size:15.2px;line-height:15.2px;color:#30474d;font-weight:400;font-family:'Liberation Sans', sans-serif;right:1230.792px;text-align:right;transform-origin:100% 0;transform:scaleX(1.0387);-webkit-text-stroke:0.55px currentColor;">Date:</div>
<div class="t" id="t79" style="top:497.83px;font-size:15.2px;line-height:15.2px;color:#30474d;font-weight:400;font-family:'Liberation Sans', sans-serif;right:1230.792px;text-align:right;transform-origin:100% 0;transform:scaleX(1.0677);-webkit-text-stroke:0.55px currentColor;">Invoice #:</div>
<div class="t" id="t80" style="top:522.73px;font-size:15.2px;line-height:15.2px;color:#30474d;font-weight:400;font-family:'Liberation Sans', sans-serif;right:1230.792px;text-align:right;transform-origin:100% 0;transform:scaleX(1.0598);-webkit-text-stroke:0.55px currentColor;">Customer ID:</div>
<div class="t" id="t81" style="top:474.66px;font-size:15.4px;line-height:15.4px;color:#30474d;font-weight:400;font-family:'Liberation Sans', sans-serif;left:686.684px;transform-origin:0 0;transform:scaleX(0.9887);">July 15, 2025</div>
<div class="t" id="t82" style="top:497.66px;font-size:15.4px;line-height:15.4px;color:#30474d;font-weight:400;font-family:'Liberation Sans', sans-serif;left:686.684px;transform-origin:0 0;transform:scaleX(1.0290);">100</div>
<div class="t" id="t83" style="top:522.56px;font-size:15.4px;line-height:15.4px;color:#30474d;font-weight:400;font-family:'Liberation Sans', sans-serif;left:686.684px;transform-origin:0 0;transform:scaleX(1.0271);">AAA</div>
<div class="r" style="left:100px;top:629px;width:793px;height:37px;background:#2e4b50;"></div>
<div class="r" style="left:100px;top:666px;width:793px;height:37px;background:#ffffff;"></div>
<div class="t" id="t84" style="top:642.33px;font-size:15.2px;line-height:15.2px;color:#ffffff;font-weight:400;font-family:'Liberation Sans', sans-serif;left:111.592px;transform-origin:0 0;transform:scaleX(1.0341);-webkit-text-stroke:0.65px currentColor;">Salesperson</div>
<div class="t" id="t85" style="top:642.33px;font-size:15.2px;line-height:15.2px;color:#ffffff;font-weight:400;font-family:'Liberation Sans', sans-serif;left:227.992px;transform-origin:0 0;transform:scaleX(1.1109);-webkit-text-stroke:0.65px currentColor;">Job</div>
<div class="t" id="t86" style="top:642.33px;font-size:15.2px;line-height:15.2px;color:#ffffff;font-weight:400;font-family:'Liberation Sans', sans-serif;left:535.5920000000001px;transform-origin:0 0;transform:scaleX(1.0549);-webkit-text-stroke:0.65px currentColor;">Payment Terms</div>
<div class="t" id="t87" style="top:642.33px;font-size:15.2px;line-height:15.2px;color:#ffffff;font-weight:400;font-family:'Liberation Sans', sans-serif;left:795.9920000000001px;transform-origin:0 0;transform:scaleX(1.0677);-webkit-text-stroke:0.65px currentColor;">Due Date</div>
<div class="t" id="t88" style="top:678.36px;font-size:15.4px;line-height:15.4px;color:#30474d;font-weight:400;font-family:'Liberation Sans', sans-serif;left:111.784px;transform-origin:0 0;transform:scaleX(0.9819);">Sonu Jain</div>
<div class="t" id="t89" style="top:678.36px;font-size:15.4px;line-height:15.4px;color:#30474d;font-weight:400;font-family:'Liberation Sans', sans-serif;left:228.784px;transform-origin:0 0;transform:scaleX(0.9359);">Sales</div>
<div class="t" id="t90" style="top:678.36px;font-size:15.4px;line-height:15.4px;color:#30474d;font-weight:400;font-family:'Liberation Sans', sans-serif;left:541.384px;transform-origin:0 0;transform:scaleX(1.0487);">Due upon receipt</div>
<div class="t" id="t91" style="top:678.36px;font-size:15.4px;line-height:15.4px;color:#30474d;font-weight:400;font-family:'Liberation Sans', sans-serif;left:853.384px;transform-origin:0 0;transform:scaleX(0.9394);">TBD</div>
<div class="r" style="left:891px;top:698px;width:3px;height:6px;background:#1f3864;"></div>
<div class="r" style="left:888px;top:701px;width:6px;height:3px;background:#1f3864;"></div>
<div class="r" style="left:100px;top:740px;width:793px;height:37px;background:#2e4b50;"></div>
<div class="r" style="left:100px;top:777px;width:793px;height:37px;background:#ffffff;"></div>
<div class="r" style="left:100px;top:851px;width:793px;height:33px;background:#ffffff;"></div>
<div class="t" id="t92" style="top:753.33px;font-size:15.2px;line-height:15.2px;color:#ffffff;font-weight:400;font-family:'Liberation Sans', sans-serif;left:111.592px;transform-origin:0 0;transform:scaleX(1.1512);-webkit-text-stroke:0.65px currentColor;">Qty</div>
<div class="t" id="t93" style="top:753.33px;font-size:15.2px;line-height:15.2px;color:#ffffff;font-weight:400;font-family:'Liberation Sans', sans-serif;left:228.892px;transform-origin:0 0;transform:scaleX(1.0993);-webkit-text-stroke:0.65px currentColor;">Description</div>
<div class="t" id="t94" style="top:753.33px;font-size:15.2px;line-height:15.2px;color:#ffffff;font-weight:400;font-family:'Liberation Sans', sans-serif;left:575.0920000000001px;transform-origin:0 0;transform:scaleX(1.0861);-webkit-text-stroke:0.65px currentColor;">Unit Price</div>
<div class="t" id="t95" style="top:753.33px;font-size:15.2px;line-height:15.2px;color:#ffffff;font-weight:400;font-family:'Liberation Sans', sans-serif;left:794.792px;transform-origin:0 0;transform:scaleX(1.0721);-webkit-text-stroke:0.65px currentColor;">Line Total</div>
<div class="t" id="t96" style="top:789.56px;font-size:15.4px;line-height:15.4px;color:#30474d;font-weight:400;font-family:'Liberation Sans', sans-serif;left:111.884px;transform-origin:0 0;transform:scaleX(0.9900);">20.00</div>
<div class="t" id="t97" style="top:789.56px;font-size:15.4px;line-height:15.4px;color:#30474d;font-weight:400;font-family:'Liberation Sans', sans-serif;left:228.784px;transform-origin:0 0;transform:scaleX(1.0191);">Areca palm</div>
<div class="t" id="t98" style="top:789.56px;font-size:15.4px;line-height:15.4px;color:#30474d;font-weight:400;font-family:'Liberation Sans', sans-serif;left:625.984px;transform-origin:0 0;transform:scaleX(0.9926);">$2.50</div>
<div class="t" id="t99" style="top:789.56px;font-size:15.4px;line-height:15.4px;color:#30474d;font-weight:400;font-family:'Liberation Sans', sans-serif;left:835.784px;transform-origin:0 0;transform:scaleX(0.9820);">$50.00</div>
<div class="t" id="t100" style="top:826.46px;font-size:15.4px;line-height:15.4px;color:#30474d;font-weight:400;font-family:'Liberation Sans', sans-serif;left:111.884px;transform-origin:0 0;transform:scaleX(0.9900);">35.00</div>
<div class="t" id="t101" style="top:826.46px;font-size:15.4px;line-height:15.4px;color:#30474d;font-weight:400;font-family:'Liberation Sans', sans-serif;left:228.784px;transform-origin:0 0;transform:scaleX(1.0371);">Majesty palm</div>
<div class="t" id="t102" style="top:826.46px;font-size:15.4px;line-height:15.4px;color:#30474d;font-weight:400;font-family:'Liberation Sans', sans-serif;left:625.984px;transform-origin:0 0;transform:scaleX(0.9926);">$3.00</div>
<div class="t" id="t103" style="top:826.46px;font-size:15.4px;line-height:15.4px;color:#30474d;font-weight:400;font-family:'Liberation Sans', sans-serif;left:826.884px;transform-origin:0 0;transform:scaleX(0.9909);">$105.00</div>
<div class="t" id="t104" style="top:863.56px;font-size:15.4px;line-height:15.4px;color:#30474d;font-weight:400;font-family:'Liberation Sans', sans-serif;left:111.884px;transform-origin:0 0;transform:scaleX(0.9900);">15.00</div>
<div class="t" id="t105" style="top:863.56px;font-size:15.4px;line-height:15.4px;color:#30474d;font-weight:400;font-family:'Liberation Sans', sans-serif;left:228.784px;transform-origin:0 0;transform:scaleX(1.0150);">Bismarck palm</div>
<div class="t" id="t106" style="top:863.56px;font-size:15.4px;line-height:15.4px;color:#30474d;font-weight:400;font-family:'Liberation Sans', sans-serif;left:625.984px;transform-origin:0 0;transform:scaleX(0.9926);">$2.50</div>
<div class="t" id="t107" style="top:863.56px;font-size:15.4px;line-height:15.4px;color:#30474d;font-weight:400;font-family:'Liberation Sans', sans-serif;left:835.784px;transform-origin:0 0;transform:scaleX(0.9820);">$37.50</div>
<div class="r" style="left:1014px;top:408px;width:67px;height:24px;background:transparent;box-sizing:border-box;border:2px solid #0f7038;"></div>
<div class="r" style="left:1077px;top:428px;width:6px;height:6px;background:#ffffff;"></div>
<div class="r" style="left:1078px;top:429px;width:4px;height:4px;background:#0f7038;"></div>
<div class="r" style="left:1892px;top:216px;width:12px;height:668px;background:#e8e8e8;"></div>
<svg class="r" style="left:1892px;top:216px;" width="12" height="16" viewBox="0 0 12 16"><path d="M6 6 L10 10.5 L2 10.5 Z" fill="#8a8a8a"/></svg>
<div class="r" style="left:1894.5px;top:234px;width:6px;height:191px;background:#8a8a8a;border-radius:3px;"></div>
<svg class="r" style="left:1892px;top:868px;" width="12" height="16" viewBox="0 0 12 16"><path d="M2 6 L10 6 L6 10.5 Z" fill="#8a8a8a"/></svg>
<div class="r" style="left:0px;top:884px;width:1904px;height:12px;background:#e8e8e8;"></div>
<svg class="r" style="left:0px;top:884px;" width="16" height="12" viewBox="0 0 16 12"><path d="M11 2.5 L11 9.5 L5 6 Z" fill="#8a8a8a"/></svg>
<div class="r" style="left:18px;top:887px;width:1408px;height:6px;background:#8a8a8a;border-radius:3px;"></div>
<svg class="r" style="left:1876px;top:884px;" width="16" height="12" viewBox="0 0 16 12"><path d="M6 2.5 L6 9.5 L12 6 Z" fill="#8a8a8a"/></svg>
<div class="r" style="left:0px;top:896px;width:1904px;height:33px;background:#f3f3f3;"></div>
<svg class="r" style="left:8px;top:900px;" width="16" height="20" viewBox="0 0 16 20"><path d="M10.3 7.5 l-4.6 4.1 l4.6 4.1" fill="none" stroke="#b4b4b4" stroke-width="1"/></svg>
<svg class="r" style="left:40px;top:900px;" width="16" height="20" viewBox="0 0 16 20"><path d="M5.8 7.5 l4.6 4.1 l-4.6 4.1" fill="none" stroke="#b4b4b4" stroke-width="1"/></svg>
<svg class="r" style="left:70px;top:902px;" width="20" height="20" viewBox="0 0 20 20"><path d="M4 5 h12 M4 9 h12 M4 13 h12" stroke="#424242" stroke-width="1.2"/></svg>
<div class="t" id="t108" style="top:904.89px;font-size:13.6px;line-height:13.6px;color:#242424;font-weight:400;font-family:'Liberation Sans', sans-serif;left:104.456px;transform-origin:0 0;transform:scaleX(1.0401);-webkit-text-stroke:0.35px currentColor;">Service invoice</div>
<div class="r" style="left:105px;top:925px;width:94px;height:3px;background:#107c41;border-radius:1px;"></div>
<svg class="r" style="left:214px;top:902px;" width="20" height="20" viewBox="0 0 20 20"><path d="M9.5 3.5 v12 M3.5 9.5 h12" stroke="#424242" stroke-width="1.2"/></svg>
<div class="r" style="left:0px;top:928px;width:1904px;height:1px;background:#e0e0e0;"></div>
<div class="r" style="left:0px;top:929px;width:1904px;height:22px;background:#ffffff;"></div>
<div class="t" id="t109" style="top:936.04px;font-size:12px;line-height:12px;color:#424242;font-weight:400;font-family:'Liberation Sans', sans-serif;left:31.52px;transform-origin:0 0;transform:scaleX(0.9981);">Workbook Statistics</div>
<svg class="r" style="left:1580px;top:936px;" width="14" height="12" viewBox="0 0 14 12"><path d="M4.5 5.5 l2.5 2.5 l2.5 -2.5" fill="none" stroke="#424242" stroke-width="1.2"/></svg>
<div class="t" id="t110" style="top:936.04px;font-size:12px;line-height:12px;color:#424242;font-weight:400;font-family:'Liberation Sans', sans-serif;left:1632.52px;transform-origin:0 0;transform:scaleX(0.9925);">Give Feedback to Microsoft</div>
<div class="r" style="left:1816px;top:941px;width:11px;height:1px;background:#424242;"></div>
<div class="t" id="t111" style="top:936.04px;font-size:12px;line-height:12px;color:#424242;font-weight:400;font-family:'Liberation Sans', sans-serif;left:1839.52px;transform-origin:0 0;transform:scaleX(0.9628);">100%</div>
<svg class="r" style="left:1878px;top:934px;" width="14" height="14" viewBox="0 0 14 14"><path d="M7.5 1.5 v11 M2 7 h11" stroke="#424242" stroke-width="1.1"/></svg>
<div class="r" style="left:719px;top:78px;width:365px;height:151px;background:transparent;box-sizing:border-box;border:4.5px solid #03a2fa;border-radius:3px;"></div>
<div class="r" style="left:736px;top:88px;width:304px;height:112px;background:#ffffff;box-shadow:0 4px 14px rgba(0,0,0,0.13), 0 0 3px rgba(0,0,0,0.1);"></div>
<svg class="r" style="left:878px;top:80px;" width="22" height="10" viewBox="0 0 22 10"><path d="M0 9 L10 1 L20 9 Z" fill="#ffffff"/></svg>
<div class="t" id="t112" style="top:105.61px;font-size:19.6px;line-height:19.6px;color:#242424;font-weight:400;font-family:'Liberation Sans', sans-serif;left:755.416px;transform-origin:0 0;transform:scaleX(1.0525);-webkit-text-stroke:0.45px currentColor;">Get started with Circularo</div>
<div class="t" id="t113" style="top:146.81px;font-size:14.4px;line-height:14.4px;color:#242424;font-weight:400;font-family:'Liberation Sans', sans-serif;left:755.424px;transform-origin:0 0;transform:scaleX(0.9522);">Circularo loaded successfully. Get started.</div>
<svg class="r" style="left:1015px;top:95px;" width="16" height="16" viewBox="0 0 16 16"><path d="M4 3.5 l9 9 M13 3.5 l-9 9" stroke="#424242" stroke-width="1.1"/></svg>
<svg class="r" style="left:1090px;top:62px;" width="100" height="42" viewBox="0 0 100 42"><path d="M93.6 9.3 L24 30.2" stroke="#03a2fa" stroke-width="3.9" stroke-linecap="round"/>
<path d="M7.3 36.7 L22.6 22.3 L28.1 37.7 Z" fill="#03a2fa" stroke="#03a2fa" stroke-width="0.6" stroke-linejoin="round"/></svg>
</body></html>
